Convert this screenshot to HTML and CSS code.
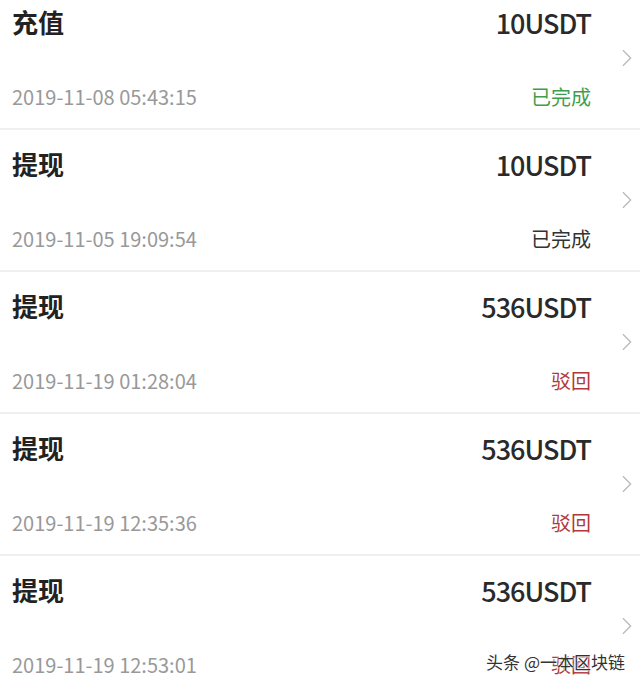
FILE: index.html
```html
<!DOCTYPE html>
<html lang="zh-CN">
<head>
  <meta charset="UTF-8" />
  <meta name="viewport" content="width=device-width, initial-scale=1.0"/>
  <title>资产记录</title>
  <link rel="stylesheet" href="styles.css">
</head>
<body>

  <ul class="records">
    <li class="record">
      <div class="col">
        <span class="type">充值</span>
        <span class="time">2019-11-08 05:43:15</span>
      </div>
      <div class="col right">
        <span class="amount">10USDT</span>
        <span class="status done">已完成</span>
      </div>
      <svg class="arrow" viewBox="0 0 12 20"><path d="M1.5 1.5 L10 10 L1.5 18.5" /></svg>
    </li>
    <li class="record">
      <div class="col">
        <span class="type">提现</span>
        <span class="time">2019-11-05 19:09:54</span>
      </div>
      <div class="col right">
        <span class="amount">10USDT</span>
        <span class="status">已完成</span>
      </div>
      <svg class="arrow" viewBox="0 0 12 20"><path d="M1.5 1.5 L10 10 L1.5 18.5" /></svg>
    </li>
    <li class="record">
      <div class="col">
        <span class="type">提现</span>
        <span class="time">2019-11-19 01:28:04</span>
      </div>
      <div class="col right">
        <span class="amount">536USDT</span>
        <span class="status rejected">驳回</span>
      </div>
      <svg class="arrow" viewBox="0 0 12 20"><path d="M1.5 1.5 L10 10 L1.5 18.5" /></svg>
    </li>
    <li class="record">
      <div class="col">
        <span class="type">提现</span>
        <span class="time">2019-11-19 12:35:36</span>
      </div>
      <div class="col right">
        <span class="amount">536USDT</span>
        <span class="status rejected">驳回</span>
      </div>
      <svg class="arrow" viewBox="0 0 12 20"><path d="M1.5 1.5 L10 10 L1.5 18.5" /></svg>
    </li>
    <li class="record">
      <div class="col">
        <span class="type">提现</span>
        <span class="time">2019-11-19 12:53:01</span>
      </div>
      <div class="col right">
        <span class="amount">536USDT</span>
        <span class="status rejected">驳回</span>
      </div>
      <svg class="arrow" viewBox="0 0 12 20"><path d="M1.5 1.5 L10 10 L1.5 18.5" /></svg>
    </li>
  </ul>

  <div class="watermark">头条 @一本区块链</div>

</body>
</html>
```

FILE: styles.css
```css
* {
  box-sizing: border-box;
}
body {
  margin: 0;
  padding: 0;
  background: #fff;
  font-family: 'Noto Sans CJK SC', 'Noto Sans', sans-serif;
  color: #222;
  overflow: hidden;
  position: relative;
  height: 690px;
}

.records {
  list-style: none;
  margin: -12px 0 0;
  padding: 0;
}

.record {
  display: flex;
  align-items: center;
  height: 142px;
  padding: 0 7px 0 12px;
  border-bottom: 2px solid #efefef;
}

.col {
  display: flex;
  flex-direction: column;
  justify-content: space-between;
  height: 100%;
  padding: 21px 0;
}

.col.right {
  margin-left: auto;
  align-items: flex-end;
}

.type {
  font-size: 26px;
  line-height: 26px;
  font-weight: 700;
  color: #222;
}

.time {
  font-size: 20px;
  line-height: 21px;
  color: #999;
}

.amount {
  font-size: 27px;
  line-height: 28px;
  font-weight: 500;
  letter-spacing: -1px;
  color: #2a2a2a;
}

.status {
  font-size: 20px;
  line-height: 20px;
  color: #333;
}

.status.done {
  color: #3f9e4d;
}

.status.rejected {
  color: #b2393b;
}

.arrow {
  width: 12px;
  height: 18px;
  margin-left: 30px;
  fill: none;
  stroke: #bbb;
  stroke-width: 1.5;
}

.watermark {
  position: absolute;
  right: 15px;
  bottom: 16px;
  font-size: 17px;
  color: #333;
  text-shadow: 0 0 2px #fff, 0 0 2px #fff, 0 0 3px #fff;
}
```
